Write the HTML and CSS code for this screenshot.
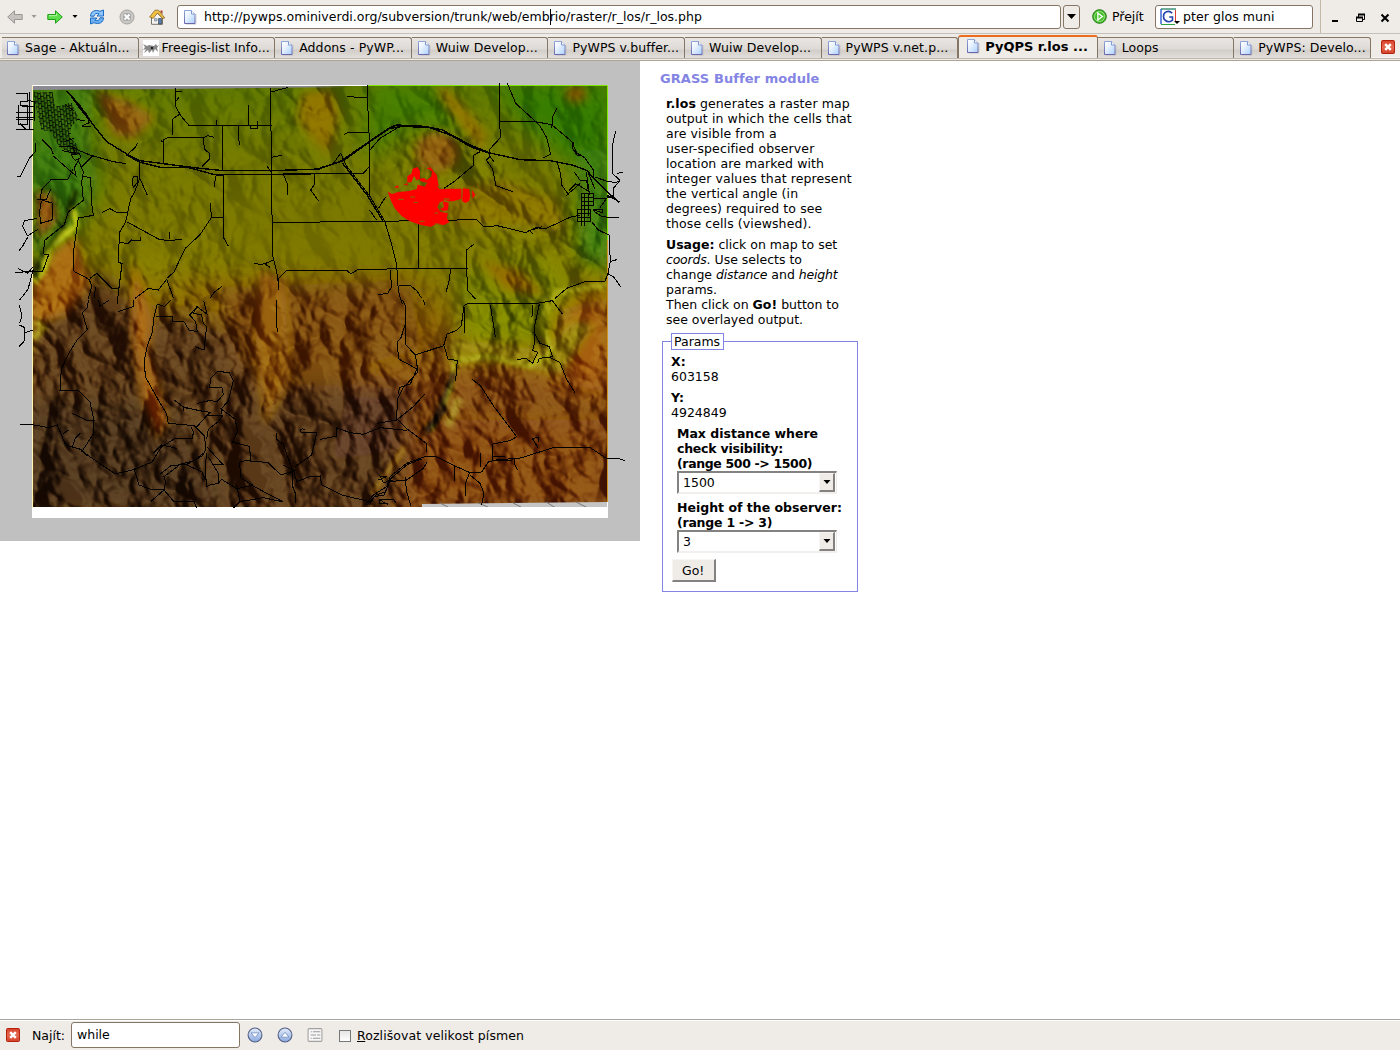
FILE: index.html
```html
<!DOCTYPE html>
<html lang="cs">
<head>
<meta charset="utf-8">
<title>PyQPS r.los</title>
<link rel="stylesheet" href="styles.css">
</head>
<body>
<svg class="defs" width="0" height="0" aria-hidden="true">
  <defs>
    <linearGradient id="paper" x1="0" y1="0" x2="1" y2="1"><stop offset="0" stop-color="#fff"/><stop offset=".35" stop-color="#edf4ff"/><stop offset="1" stop-color="#a9d0ff"/></linearGradient>
    <linearGradient id="edge" x1="0" y1="0" x2="0" y2="1"><stop offset="0" stop-color="#8fa6d8"/><stop offset="1" stop-color="#6c67ad"/></linearGradient>
    <linearGradient id="red" x1="0" y1="0" x2="0" y2="1"><stop offset="0" stop-color="#d8402a"/><stop offset=".5" stop-color="#e56a50"/><stop offset="1" stop-color="#d3402a"/></linearGradient>
    <linearGradient id="orb" x1="0" y1="0" x2="0" y2="1"><stop offset="0" stop-color="#e4edfb"/><stop offset="1" stop-color="#8ba9de"/></linearGradient>
    <symbol id="page" viewBox="0 0 16 16"><path d="M4 15.2h10V5" fill="none" stroke="#bbb" stroke-opacity=".6"/><path d="M2.5 1.5h7l3.5 3.5v9.5H2.5z" fill="url(#paper)" stroke="url(#edge)"/><path d="M9.5 1.5V5H13" fill="#fff" stroke="#8196cf"/></symbol>
    <symbol id="close" viewBox="0 0 14 14"><rect x=".5" y=".5" width="13" height="13" rx="1" fill="url(#red)" stroke="#b3200c"/><path d="M4.2 4.2l5.6 5.6m0-5.6L4.2 9.8" stroke="#fff" stroke-width="2.4"/></symbol>
  </defs>
</svg>
<header class="toolbar">
  <svg class="ic back" viewBox="0 0 16 14"><path d="M.7 7L7.500.8v3.700h7.700v5H7.500v3.700z" fill="#c5c3c0" stroke="#999793"/></svg>
  <svg class="tri dim" viewBox="0 0 5 3"><path d="M0 0h5L2.500 3z"/></svg>
  <svg class="ic fwd" viewBox="0 0 16 14"><path d="M15.300 7L8.500.8v3.700H.8v5h7.700v3.700z" fill="#5cdf4b" stroke="#1f9d18"/><path d="M2 5.700h7.600V3.500" fill="none" stroke="#b5f5a8"/></svg>
  <svg class="tri" viewBox="0 0 5 3"><path d="M0 0h5L2.500 3z"/></svg>
  <svg class="ic reload" viewBox="0 0 16 16"><path d="M1.500 7.200C1.500 2.500 6 .2 11 2.300L14.500 1v6H8l2-2.300C7.500 3.800 5.500 4.800 5 7.200z" fill="#8cc6fa" stroke="#1a6cc4"/><path d="M14.500 8.800c0 4.700-4.500 7-9.500 4.900L1.500 15V9H8l-2 2.300c2.500.9 4.500-.1 5-2.500z" fill="#6db0f2" stroke="#1a6cc4"/></svg>
  <svg class="ic stop" viewBox="0 0 16 16"><circle cx="8" cy="8" r="7" fill="#cbc9c6" stroke="#a5a29e"/><rect x="4" y="4" width="8" height="8" rx="2" fill="#aaa"/><path d="M5.500 5.500l5 5m0-5l-5 5" stroke="#fff" stroke-width="1.800"/></svg>
  <svg class="ic home" viewBox="0 0 16 16"><path d="M2.500 8l5-4.500L13.500 9v6.300h-11z" fill="#f8f6f2" stroke="#77736c"/><path d="M6 1.200h3.500L15.800 9l-2.300.3L8.500 4 4.300 9.300.6 8z" fill="#f0c040" stroke="#8a6724" stroke-width=".8"/><path d="M11.500 1.500h2V5l-2-2z" fill="#ad3a27"/><path d="M9.500 9.500h3V15h-3z" fill="#557eb3" stroke="#333" stroke-width=".6"/><path d="M5.500 9.500H8V12H5.500z" fill="#abcaf0" stroke="#777" stroke-width=".6"/></svg>
  <div class="url"><svg class="pg" viewBox="0 0 16 16"><use href="#page"/></svg><span>http://pywps.ominiverdi.org/subversion/trunk/web/emb<i class="caret"></i>rio/raster/r_los/r_los.php</span></div>
  <div class="drop"><svg viewBox="0 0 9 5"><path d="M0 0h9L4.500 5z"/></svg></div>
  <svg class="ic go" viewBox="0 0 15 15"><circle cx="7.500" cy="7.500" r="6.800" fill="#43ba28" stroke="#217d13"/><circle cx="7.500" cy="7.500" r="5" fill="none" stroke="#a0e68c"/><path d="M5.800 4l4.800 3.500-4.800 3.500z" fill="#5fd143" stroke="#fff" stroke-width="1.200"/></svg>
  <span class="golabel">Přejít</span>
  <div class="search"><svg viewBox="0 0 22 18"><path d="M1 16V1h15" fill="none" stroke="#4763d0"/><path d="M1 1h15" stroke="#3aa64a"/><path d="M1 1v15" stroke="#3568d4"/><path d="M1 16.500h14" stroke="#28a53b"/><path d="M15.500 2v11" stroke="#d93b31"/><path d="M12.300 5.200C8.500 1.500 3.200 4 3.500 8.700c.3 5 6 6.300 9 3.500V9H9.200" fill="none" stroke="#2546ad" stroke-width="1.600"/><path d="M14 13h6l-3 3z"/></svg><span>pter glos muni</span></div>
  <div class="winctl">
    <svg viewBox="0 0 60 14"><path d="M3 10h6" stroke="#000" stroke-width="2"/><path d="M29.500 3.500h6v5h-6z" fill="none" stroke="#000"/><path d="M29 3.500h7" stroke="#000" stroke-width="2"/><path d="M27.500 6.500h6v4h-6z" fill="#efebe7" stroke="#000"/><path d="M27 6.500h7" stroke="#000" stroke-width="2"/><path d="M52.500 3.500l7 7m0-7l-7 7" stroke="#000" stroke-width="2"/></svg>
  </div>
</header>
<nav class="tabs">
  <div class="tab"><svg viewBox="0 0 16 16"><use href="#page"/></svg>Sage - Aktuáln...</div>
  <div class="tab fg"><svg viewBox="0 0 16 16"><path d="M0 0h16v16H0z" fill="#fff"/><path d="M0 4l4 2 2-1 5 1 2-2 1 2 2-1-2 3 1 4-3-3-2 4-1-3-3 3-1-3-4 3 2-4-3 1 2-3z" fill="#888"/><circle cx="9" cy="8" r="1.300" fill="#222"/></svg>Freegis-list Info...</div>
  <div class="tab"><svg viewBox="0 0 16 16"><use href="#page"/></svg>Addons - PyWP...</div>
  <div class="tab"><svg viewBox="0 0 16 16"><use href="#page"/></svg>Wuiw Develop...</div>
  <div class="tab"><svg viewBox="0 0 16 16"><use href="#page"/></svg>PyWPS v.buffer...</div>
  <div class="tab"><svg viewBox="0 0 16 16"><use href="#page"/></svg>Wuiw Develop...</div>
  <div class="tab"><svg viewBox="0 0 16 16"><use href="#page"/></svg>PyWPS v.net.p...</div>
  <div class="tab active"><svg viewBox="0 0 16 16"><use href="#page"/></svg>PyQPS r.los ...</div>
  <div class="tab"><svg viewBox="0 0 16 16"><use href="#page"/></svg>Loops</div>
  <div class="tab"><svg viewBox="0 0 16 16"><use href="#page"/></svg>PyWPS: Develo...</div>
  <svg class="closetab" viewBox="0 0 14 14"><use href="#close"/></svg>
</nav>
<main class="content">
  <svg class="map" viewBox="0 61 640 480">
    <defs>
      <linearGradient id="land" x1="0" y1="0" x2="0" y2="1"><stop offset="0" stop-color="#5c7600"/><stop offset=".2" stop-color="#737600"/><stop offset=".42" stop-color="#7e7600"/><stop offset=".57" stop-color="#8b6204"/><stop offset=".72" stop-color="#834810"/><stop offset="1" stop-color="#6f4012"/></linearGradient>
      <linearGradient id="fade" x1="0" y1="0" x2="0" y2="1"><stop offset="0" stop-color="#555"/><stop offset=".38" stop-color="#666"/><stop offset=".54" stop-color="#fff"/><stop offset="1" stop-color="#fff"/></linearGradient>
      <mask id="south"><path d="M33 86h574v421H33z" fill="url(#fade)"/><g fill="#bbb" filter="url(#b12)"><ellipse cx="120" cy="108" rx="38" ry="24"/><ellipse cx="315" cy="115" rx="28" ry="40"/><ellipse cx="435" cy="160" rx="45" ry="30"/><path d="M430 85l60 60 10 40 110 30v130l-90-60-70-80z"/><path d="M33 180l40 20-10 80H33z"/></g><path d="M225 200h165l20 68 55-10v85h-50l-30-60H280l-45-20z" fill="#222" opacity=".7" filter="url(#b12)"/></mask>
      <filter id="b12" x="-50%" y="-50%" width="200%" height="200%"><feGaussianBlur stdDeviation="11"/></filter>
      <filter id="b5" x="-50%" y="-50%" width="200%" height="200%"><feGaussianBlur stdDeviation="5"/></filter>
      <filter id="b2" x="-50%" y="-50%" width="200%" height="200%"><feGaussianBlur stdDeviation="2"/></filter>
      <filter id="relief" x="0" y="0" width="100%" height="100%" color-interpolation-filters="sRGB"><feTurbulence type="turbulence" baseFrequency=".018 .012" numOctaves="5" seed="21"/><feColorMatrix values="0 0 0 0 0 0 0 0 0 0 0 0 0 0 0 -1.200 -.6 0 0 1"/><feGaussianBlur stdDeviation="1"/><feDiffuseLighting surfaceScale="17" diffuseConstant=".68" lighting-color="#fff"><feDistantLight azimuth="195" elevation="50"/></feDiffuseLighting></filter>
      <clipPath id="area"><path d="M33 86h574v421H33z"/></clipPath>
      <pattern id="streets" width="18" height="15" patternUnits="userSpaceOnUse" patternTransform="rotate(-6)"><path d="M0 1.500h11v6h7M2 0v15M12 7v8" fill="none" stroke="#000" stroke-width="2.600"/></pattern>
    </defs>
    <path d="M0 61h640v480H0z" fill="#c0c0c0"/>
    <path d="M32 85h576v433H32z" fill="#fff"/>
    <g clip-path="url(#area)">
      <path d="M33 86h574v421H33z" fill="url(#land)"/>
      <g filter="url(#b12)">
        <path d="M20 80h75l-5 60 10 50-35 50-30 20-20-50z" fill="#3c7a08"/>
        <path d="M370 80h60l40 55-60-10-45 35z" fill="#427a00"/>
        <path d="M490 80h125v110l-50-30-45-40z" fill="#337800"/>
        <path d="M575 150h40v120l-35-10z" fill="#3b7d08"/>
        <path d="M33 290l70-15 50 40 45 0 60 30 50 50 50 20 40 80-60 30H20z" fill="#5a3816"/>
        <path d="M160 290l60 10 20 60 60 70 60 10-20-70 80-20-10-70z" fill="#7c4a0b"/>
        <path d="M235 385h130l40 80-30 50H180z" fill="#563618"/>
        <path d="M20 400h150l60 110H20z" fill="#462e16"/>
        <path d="M450 270l80-20 50 30-30 70-90 0z" fill="#788000"/>
        <path d="M560 310l50-15v100l-55-15z" fill="#a45b09"/>
        <path d="M430 420h180v90H400z" fill="#844508"/>
        <path d="M350 385l60 5-10 60-70 10z" fill="#55331a"/>
      </g>
      <g filter="url(#b5)">
        <path d="M95 90l35 12 25 15-22 22-20-5-10-25z" fill="#8f5d09"/>
        <path d="M302 92l30-3 8 25-10 40-15-10-18-25z" fill="#866a06"/>
        <ellipse cx="437" cy="152" rx="22" ry="20" fill="#8f5f08"/>
        <path d="M435 86l14 3 38 44-5 20-35-45z" fill="#8c6e00"/>
        <ellipse cx="576" cy="94" rx="11" ry="9" fill="#8c6404"/>
        <path d="M35 190l18 5 5 25-20 20z" fill="#8f4f0a"/>
        <path d="M480 260l40 10 25 25-40-5z" fill="#8a6204"/>
        <path d="M415 190l90-10 50 20 10 30-60-5-50 0z" fill="#857005"/>
        <path d="M55 250l20-15 15 50-25 30-35 10v-35z" fill="#a56508"/>
        <path d="M133 260l20 60-5 30 20 70-10 20-15-40-10-60z" fill="#a05b08"/>
        <path d="M260 270l25 10 5 100-25 45-10-80z" fill="#965e08"/>
        <path d="M450 338l90 12 35-30 20 5-35 50-60-15-50 5z" fill="#978509"/>
      </g>
      <g filter="url(#b2)">
        <path d="M73 208l4 18-28 20-4 22-12 14" fill="none" stroke="#c6cd18" stroke-width="6"/>
        <path d="M36 320l8 8-11 10" fill="none" stroke="#a99712" stroke-width="6"/>
        <path d="M605 285l-48 7-17 30 12 30-22 14-45-10-30 5-4 28-18 40" fill="none" stroke="#aead13" stroke-width="4"/>
        <path d="M446 406l-20 26" stroke="#231607" stroke-width="7"/>
        <path d="M454 372l-16 42" stroke="#342008" stroke-width="6"/>
        <path d="M459 398l-11 28" stroke="#a1811b" stroke-width="8"/>
        <path d="M76 190l-13 38-20 26-8 24" fill="none" stroke="#243b06" stroke-width="6"/>
        <path d="M405 447l-32 46" stroke="#9a6b10" stroke-width="4"/>
      </g>
      <g mask="url(#south)" class="shade"><path d="M-150-100h950v800h-950z" transform="rotate(-24 320 300)" filter="url(#relief)"/></g>
      <path d="M33 86h274l40 1-180 2-134 1z" fill="#8b8991"/>
      <path d="M422 504l185-2v6H422z" fill="#c5c5c5"/><path d="M440 503l8 4m30-4l10 4m25-4l8 4m25-5l10 6m20-6l12 6" stroke="#777"/>
    </g>
    <path d="M32.500 508V86" stroke="#fff5b0" fill="none"/><path d="M33 85.500h334" stroke="#fff"/><path d="M368 85.500h239.500V240" fill="none" stroke="#82e400"/><path d="M607.500 240v262" stroke="#cf9420"/>

    <g class="roads" transform="translate(0 60) scale(.33333)">
      <path d="M101 95h57l7 45 50-12 22 48-22 22-5 35 20 20 8 32-32-6-30-22-24-40-28-8-15-60z" fill="url(#streets)" stroke="none"/>
      <path d="M48 100h35v25H62v12h20v35H48m0 8h52m-52 28h55M55 135v60h28v-55m-35 32h55m-20-50l20 2v60M90 95v115m-30-20l20 20m-15-70h40M48 158h50"/>
      <path d="M200 92l40 45 40 58 40 50 60 37 40 20 70 9 110 14 70 7h145l145-5M206 98l30 42 42 52m102 93l40 22 65 16 75-2 84 23h110l210-3" class="trunk"/>
      <path d="M230 130l30 32 8 26-22 10 26 2m-42-22l25 5m-60-50l28 20m-2 82l-30 10m-13 15l40 0 8 20-40-8m30-12l22 12 32 13 70 20 38 6m-100-24l-35 35M213 285l25-4 5 12-18 8z"/>
      <path d="M380 285l25-22 8-15M420 308v48l22 50M400 350h12v18l-12 14-4-12zM419 356l-15 40-12 20-15 70-18 30-5 90 12 5-10 80-5 40M490 310V240l16-8h104l3 35 17 15-2 15-22 22M482 242l10 4m120-13l12-6 18 5M527 84v55l15 28 25 29h248M527 96h18m-18 28l10-12m0 52l-20 14v48M650 196v-17m95 17v-60M751 196v10h21V183M715 196v38l5 20M668 196v136m2 10v190l15 26M670 345l-22 3-6 32M670 472h-35l-5-42m5 42l-35 52-45 42-33 70-20 18m-120-168l40 22 55 30 30 4 38-4m-37-22v20M360 548l25 2 10-10 28 2-1-10"/>
      <path d="M812 84l2 252 4 252 12 45 4 30M814 96l50-14m-50 210l32-6M815 340l-14-22m19 169h140M850 342l12 30v32m82-64v32l-12 18 24 33M763 610l20 4 20-6 15-8m-8 22l-15-10M834 690l2-35 25-24h99"/>
      <path d="M108 248v25l-20 22-22 45-5 10-10 0M160 283l-6-16-28-28M160 288l68 60-5-25 12-22 15 35-5 30 5 55-45 35-12 38-60 48-2 40 15 2-18 50-60 2-22 2M218 328l-14 30h-50l-28 30-6 30 38 12-2 50-35 10-2-38 5-30m-12-2h26l14-32M112 475l-38 7-6 16 14 30 32-20M84 530l-16 28-12 16M250 350l22 2 3 80 5 34-45 8-16 110 3 50 45 24 9 20-12 40M100 628l-16 60-25 32M100 620l-18 20-28-15M305 458l25-12 18 10 32 2M405 715l40-30 30 5 25-32 20 55M270 655l20-15 45 45 22 0m-75 30l5-35M630 715l12-18 24-18"/>
    </g>
    <g class="roads" transform="translate(320 60) scale(.33333)">
      <path d="M0 325l60-20 90-62 60-40 20-8 85 4 50 10 90 48 55 22 90 20 90 3 70 14 40 15 30 33 38 37 30 27M0 324l70-22 80-57 60-40 40-6 80 4 65 24 60 35 60 20" class="trunk"/>
      <path d="M150 270l30-35 50-30M40 310l22-30 10 20-20 8m15-14l10 20 72 94 45 75 18 60 18 70 5 80 12 40M0 340h130l18-20M143 75v55l5 110v168M143 113l-35-1-28-4M72 224l10-6h62M196 412l-20 32m-28 6l22 30m-170 4h180l290-5 22 22 20 0 15-5 90 22 30-15 30 3 75-35 28-5M295 490v133M0 631h80l12 10 20-11 120-4h211M210 630l5 50-12 20-28 4M238 676l35 2 18 15 14 22M440 610V570l22-18M440 610l2 80 25 28M392 627l-4 32-10 38"/>
      <path d="M68 310l74 96 46 76" class="trunk"/>
      <path d="M538 70v112l4 50-32 35-2 20 15 20M540 184h100l55 10 60 50 15 35 24 14 25 35 2 25M562 70l25 60 55 50 18 18 20 35 12 50-22 10M695 205l4-38 11-22M480 275l-18 10v30l-60 50-30 20M498 302l12-12m-10 12l18 25 10 50 50 18M712 308l10 35 3 32 20 28-8 4m8-6l35-30M762 335l20 28 18 0 5 30-38-22-20 20m52-55l10 70m-5-70l20 50m0-35l35 12 28 5 13-5m-60 80l25-35M760 245l-2 20 14 22 12-3M887 213l-10 44 1 70-2 12 24 22-18 22v23l-20 8-40 2m78 10l-38-20m28-65l20-5M784 402h36v35h-36zm0 11h36m-36 11h36M795 402v35m12-35v35M772 450h40v36h-40zm0 12h40m-40 12h40M784 437v60m11-60v60m12-60v30M820 450h28v8l-28-8m-5 35l20 25 32 15 4 78-8 40-8 20-60 2-55 20-35 30M820 452l25 18 53 4m-26 130l18-5M862 640l20 12 20 28M640 522l-12-10 38-12"/>
    </g>
    <g class="roads" transform="translate(0 300) scale(.33333)">
      <path d="M266 0l-5 25-14 12 15 52-30 30-24 38-24 50-4 64 55 0 35 35 12 55v38l-36 55 100 68 58-14 52-22 28-45 40-25h52l5-20-8-15M60 375l42 0 45 8 25-8 25 60 45 13 20 20M190 400l16-10M216 445l10-30 15-15M215 340l20 8 28 15h22M298 20l30-20m-32 0l4 20M400 0v20l-45 15M58 70l8-20-8-35m0 60l17 8v15l25-8m-25 5l-3 30-15 15"/>
      <path d="M512 0l-18 20-22-8-10 40-5 45-15 40-10 50 5 45 38 68 25 42 5 28 78 7 30 30 5 40-10 20-45 25-50 5-32 25M467 48l50 2v15l35 0 15 25 25 5-5-30-18-20 22-25 30 22-10-40M590 22l-10 18 25 5 5 25 10 10-8 70-28-10M523 300l25 20 50 12 32 5-15 16-25 28m-40-60v12m5-12l8 6M592 310l35-8 25 2 18-20-4-20-38 0 5-30 20-20 35 4 12 25-15 60-20 22v18M620 418l5-30 32-25 10-15-42 0M660 325l45 32 8 35-15 35 50 12 5 45 50 3 40 38 45-15M402 505l15 50 40 15h35l5-25-5-15 50-38 40-10 32-25M492 570l-40 35M492 570l30 35 60-2 8 22M460 460l25-25 45 10M560 495l45 20 12 25M620 440l50 55-30 0M620 460l-5 40 5 60 10-5 25-5 10-12 45 28 45-10 95 50M655 550v-30l-30-50M718 485l5 50 35 20M710 555l10 50-20 20m20-20l70-12 55 12M720 485l30-5M830 400v18l20 15 28 80-15 12m15-15l-30-15m30 15v50l10 25-2 25M880 510l10 35 40-15h30M885 500l50-35 10-45 5-22h-45a6 6 0 1 1 8-8M830 0v80l4 15"/>
    </g>
    <g class="roads" transform="translate(320 300) scale(.33333)">
      <path d="M248 0l10 20 0 115 28 30 8 50-45 50-15 30-5 60 30 30 60 45 0 25M255 75l-12 38-12 14 5 50 55 30-20 45-32 10-5 20M286 165l85-28 10-35 28-10 15-15 8-60 10-5h200l55-10 30 40M435 20v80M511 15l15 95M372 137l12 40 28 5-5 60M638 15l-2 35M658 12l-15 70 0 50-5 20 15 5-15 33-20-15-28 4M640 95l20 35 28 10 10 30-40 5-5 15M690 173l30 15 20 50 25 40M457 238l25 20 40 62 68 90-20 12-52 10v50M170 370l60-10 50-40 34-38M0 418l50-10v-25l40 15 40 5 50-20 80 8"/>
      <path d="M0 525l5 30 60 30 85 20M135 615l25-30 40-25 10-30 50-40 55-20 30-2 60 30 45 20 35-2 20-30 30-8 60-2 70-22 30-10h117l50 33h38l14 5M518 482l60-2M483 460v40M520 470h34M655 445l-18-30 18-2v12M583 475v15l10 20M403 498v45M448 520l-12 30v37M450 525l30 25 12 30-7 35M148 615l15-25 30-5 15-40 52-5 50-35 12-20M175 540l25-10-20-2 10 20 30-8M255 530l5 45 12 42M205 615l-25-15v12h25m-25-12l40-2 8 10M142 615l25-30 30-10 16-40 50-42 42-16M310 0l4 14"/>
    </g>
    <g transform="translate(320 60) scale(.33333)" fill="#f00">
      <path d="M203 395L216 402 235 396 262 394 290 388 293 374 315 380 320 370 350 376 358 388 400 386 424 386V416L400 424 386 424 375 420 358 428 352 442 362 456 384 460 380 474 388 486 372 495 350 492 332 500 300 494 270 484 245 468 225 446 212 420Z"/>
      <path d="M368 424l18 4-2 22-14 3-10-6 12-6zM262 348l12-6 4-16 14-5 8 12 0 22-10 6-8-14-8 20-12 0zM320 325l12-3 10 14 8 8 6 34-30-2-4-8-20-4-4-8 14-2 8 6 14-10 2-16zM428 385l20 2 2 20-2 16-12 6-10-6 2-20zM456 390l10 14-8 12zM222 382l12-6 2 8zM250 374l12-4 2 6z"/>
      <path d="M235 418h16m20-7h14m-4 16h12m78-10h18m-45 42h10m-56 25h16m30 8h14" stroke="#7a7000" stroke-width="3"/>
    </g>
  </svg>
  <section class="side">
    <h1>GRASS Buffer module</h1>
    <p class="about"><b>r.los</b> generates a raster map<br>output in which the cells that<br>are visible from a<br>user-specified observer<br>location are marked with<br>integer values that represent<br>the vertical angle (in<br>degrees) required to see<br>those cells (viewshed).</p>
    <p><b>Usage:</b> click on map to set<br><em>coords</em>. Use selects to<br>change <em>distance</em> and <em>height</em><br>params.<br>Then click on <b>Go!</b> button to<br>see overlayed output.</p>
    <div class="params">
      <div class="legend">Params</div>
      <div class="coord"><b>X:</b><br>603158</div>
      <div class="coord"><b>Y:</b><br>4924849</div>
      <div class="field"><b>Max distance where<br><span class="tight">check visibility:</span><br><span class="range">(range 500 -&gt; 1500)</span></b><div class="select"><span>1500</span><i><svg viewBox="0 0 7 4"><path d="M0 0h7L3.500 4z"/></svg></i></div></div>
      <div class="field"><b>Height of the observer:<br><span class="tight">(range 1 -&gt; 3)</span></b><div class="select"><span>3</span><i><svg viewBox="0 0 7 4"><path d="M0 0h7L3.500 4z"/></svg></i></div></div>
      <div class="button">Go!</div>
    </div>
  </section>
</main>
<footer class="find">
  <svg class="x" viewBox="0 0 14 14"><use href="#close"/></svg>
  <span class="lbl">Najít:</span>
  <div class="query">while</div>
  <svg class="orb" viewBox="0 0 15 15"><circle cx="7.500" cy="7.500" r="6.500" fill="url(#orb)" stroke="#525f85"/><path d="M3.800 5.500h7.400L7.500 10z" fill="#fff" stroke="#6685ba" stroke-width=".7"/></svg>
  <svg class="orb" viewBox="0 0 15 15"><circle cx="7.500" cy="7.500" r="6.500" fill="url(#orb)" stroke="#525f85"/><path d="M3.800 9.500h7.400L7.500 5z" fill="#fff" stroke="#6685ba" stroke-width=".7"/></svg>
  <svg class="orb" viewBox="0 0 15 15"><rect x="1" y="1.500" width="13" height="12" rx="1" fill="#f7f7f7" stroke="#a3a19f"/><path d="M3.500 4.500h1m1 0h7M3.500 7.500h5m1 0h3M3.500 10.500h1m1 0h7" stroke="#999"/></svg>
  <span class="check"></span>
  <span class="case"><u>R</u>ozlišovat velikost písmen</span>
</footer>
</body>
</html>
```
FILE: styles.css
```css
* { box-sizing: border-box; }
body { margin: 0; width: 1400px; height: 1050px; overflow: hidden; display: flex; flex-direction: column; background: #fff; color: #000; font: 13px/15px "DejaVu Sans", sans-serif; white-space: nowrap; }
svg { display: block; flex: none; }
.defs { position: absolute; }

.toolbar { height: 34px; flex: none; display: flex; align-items: center; background: #efebe7; border-bottom: 1px solid #c4c0bc; padding-left: 7px; }
.ic { width: 16px; height: 16px; }
.tri { width: 6px; height: 3px; margin: 0 12px 0 8px; }
.dim { fill: #999; }
.fwd + .tri { margin-right: 11px; margin-left: 9px; }
.dim + .fwd { margin-left: -2px; }
.reload { margin-right: 14px; }
.stop { margin-right: 14px; }
.home { margin-right: 12px; }
.url { width: 884px; height: 24px; display: flex; align-items: center; background: #fff; border: 1px solid #857565; border-radius: 3px; padding-left: 4px; font-size: 12.500px; }
.url span { letter-spacing: .02px; }
.url .pg { width: 16px; height: 16px; margin-right: 6px; }
.caret { display: inline-block; width: 1px; height: 16px; margin-right: -1px; background: #000; vertical-align: -4px; }
.drop { width: 17px; height: 24px; margin-left: 2px; display: flex; align-items: center; justify-content: center; border: 1px solid #857565; border-radius: 3px; }
.drop svg { width: 9px; height: 5px; }
.go { width: 15px; height: 15px; margin-left: 12px; }
.golabel { width: 43px; margin-left: 5px; font-size: 12.500px; }
.search { width: 158px; height: 24px; display: flex; align-items: center; background: #fff; border: 1px solid #857565; border-radius: 3px; padding-left: 4px; font-size: 12.500px; }
.search svg { width: 22px; height: 18px; margin-right: 1px; }
.search span { letter-spacing: .06px; }
.winctl { height: 33px; margin-left: 7px; border-left: 1px solid #c4b9a9; padding: 11px 0 0 8px; }
.winctl svg { width: 60px; height: 14px; overflow: visible; }

.tabs { height: 27px; flex: none; display: flex; align-items: flex-start; padding: 3px 0 0 2px; background: linear-gradient(#efebe7 0 23px, #f8f6f4 23px 24px, #bdb8b3 24px 25px, #efebe7 25px 26px, #b1a393 26px); }
.tab { width: 136.600px; height: 21px; display: flex; align-items: center; padding: 0 0 1px 3px; border: 1px solid #857565; border-width: 1px 1px 0 0; border-radius: 0 3px 0 0; background: linear-gradient(#e9e6e3, #dedad6 55%, #d2cdc8 60%, #e2deda); font-size: 12.500px; letter-spacing: .08px; }
.tab svg { width: 16px; height: 16px; margin-right: 4px; }
.tab.fg svg { margin-right: 3px; }
.tab + .tab { padding-left: 4px; }
.tab + .tab.active { width: 139.500px; height: 23px; margin-top: -2px; padding: 0 0 3px 6px; border-left-width: 1px; border-top: 2px solid #ed6d1f; border-radius: 3px 3px 0 0; background: #efebe7; font-weight: bold; font-size: 13px; letter-spacing: 0; }
.closetab { width: 14px; height: 14px; margin: 3px 0 0 10px; }

.content { flex: 1; display: flex; align-items: flex-start; }
.map { width: 640px; height: 480px; }
.roads { fill: none; stroke: #000; shape-rendering: crispEdges; }
.roads path { vector-effect: non-scaling-stroke; }
.trunk { stroke-width: 1.400px; }
.shade { mix-blend-mode: soft-light; }

.side { padding: 10px 0 0 20px; }
h1 { margin: 0 0 10px; font-size: 13px; line-height: 15px; letter-spacing: .08px; color: #8484e4; }
p { margin: 0 0 6px; padding-left: 6px; font-size: 12.500px; }
.about { letter-spacing: .1px; }
em { letter-spacing: -.2px; }
.params { width: 196px; height: 251px; margin: 14px 0 0 2px; padding: 0 8px; border: 1px solid #8484e4; font-size: 12.500px; }
.legend { width: 53px; height: 17px; margin-top: -9px; padding-left: 2px; border: 1px solid #8484e4; background: #fff; }
.coord { margin: 4px 0 6px; }
.coord + .coord { margin-top: 6px; }
.field { margin: 6px 0 6px 6px; }
.range { letter-spacing: -.36px; }
.tight { letter-spacing: -.23px; }
.select { width: 160px; height: 23px; display: flex; align-items: center; justify-content: space-between; padding: 0 1px 0 4px; border: 2px solid #848280; border-right: 1px solid #eeebe7; border-bottom-color: #f2efec; }
.select i { width: 16px; height: 19px; display: flex; align-items: center; justify-content: center; background: #efebe7; border: 1px solid #f8f6f4; border-right: 2px solid #848280; border-bottom: 2px solid #848280; }
.select i svg { width: 8px; height: 4px; }
.button { width: 44px; height: 23px; margin-left: 1px; padding: 3px 0 0 9px; border: 1px solid #f8f6f4; border-right: 2px solid #848280; border-bottom: 2px solid #848280; background: #efebe7; }

.find { height: 31px; flex: none; display: flex; align-items: center; border-top: 1px solid #a8a49f; box-shadow: inset 0 1px #fff; background: #efebe7; padding-left: 6px; font-size: 12.500px; }
.find .x { width: 14px; height: 14px; margin-right: 12px; }
.lbl { width: 39px; }
.query { width: 169px; height: 26px; padding: 4px 5px; border: 1px solid #857565; border-radius: 3px; background: #fff; margin-right: 7px; }
.orb { width: 16px; height: 16px; margin-right: 14px; }
.check { width: 12px; height: 12px; margin: 1px 6px 0 2px; border: 1px solid #777; background: linear-gradient(#e6e6e6, #fff); }
.case { letter-spacing: .08px; }
```
